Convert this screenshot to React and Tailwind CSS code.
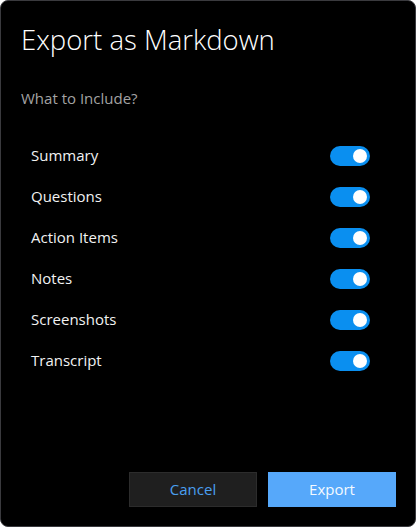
import React, { useState } from "react";

const items = ["Summary", "Questions", "Action Items", "Notes", "Screenshots", "Transcript"];

function Toggle({ on, onChange }) {
  return (
    <button
      onClick={onChange}
      className={`flex h-[20px] w-[40px] items-center rounded-full px-[3px] ${
        on ? "justify-end bg-[#0a8ff0]" : "justify-start border border-[#9a9a9a] bg-transparent"
      }`}
    >
      <span className={`block h-[14px] w-[14px] rounded-full ${on ? "bg-white" : "bg-[#cfcfcf]"}`} />
    </button>
  );
}

export default function App() {
  const [opts, setOpts] = useState(items.map(() => true));

  return (
    <div
      className="flex h-[527px] w-[416px] flex-col rounded-lg border border-[#3a3a3e] bg-black text-white"
      style={{ fontFamily: '"Open Sans", "Noto Sans", sans-serif' }}
    >
      <h1 className="ml-[20px] mt-[20px] text-[27.5px] font-light leading-[38px] text-white">
        Export as Markdown
      </h1>
      <p className="ml-[20px] mt-[29px] text-[15px] leading-[20px] text-[#a3a3a3]">What to Include?</p>

      <div className="mt-[27px] flex flex-col">
        {items.map((label, i) => (
          <div key={label} className="flex h-[41px] items-center justify-between pl-[30px] pr-[45px]">
            <span className="text-[15px] text-[#f2f2f2]">{label}</span>
            <Toggle
              on={opts[i]}
              onChange={() => setOpts((prev) => prev.map((v, j) => (j === i ? !v : v)))}
            />
          </div>
        ))}
      </div>

      <div className="mt-auto mb-[19px] mr-[19px] flex justify-end gap-[11px]">
        <button className="h-[35px] w-[128px] border border-[#2c2c2c] bg-[#1f1f1f] text-[15px] text-[#4a9ff0]">
          Cancel
        </button>
        <button className="h-[35px] w-[128px] bg-[#56a8fa] text-[15px] text-[#f4faff]">Export</button>
      </div>
    </div>
  );
}
